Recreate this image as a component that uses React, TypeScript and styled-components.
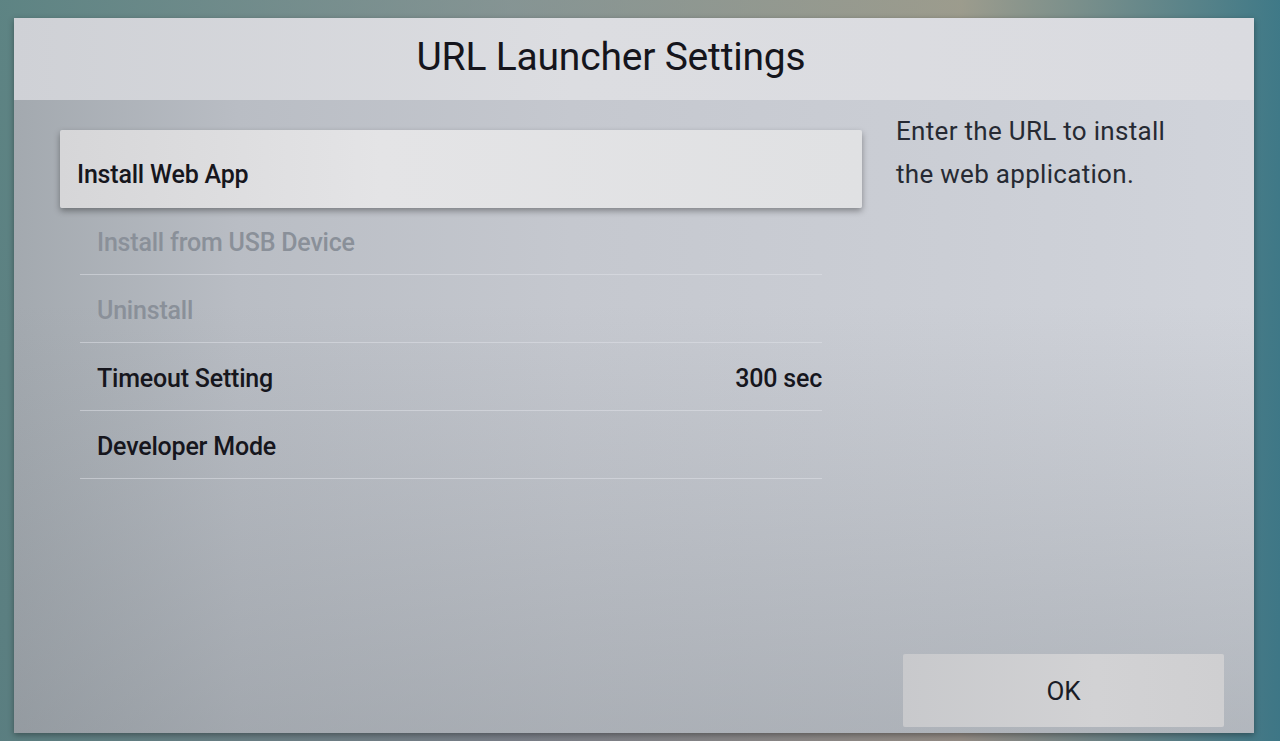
import React from 'react';
import styled, { createGlobalStyle } from 'styled-components';

const GlobalStyle = createGlobalStyle`
  html, body {
    margin: 0;
    padding: 0;
    width: 1280px;
    height: 741px;
    overflow: hidden;
  }
  body {
    font-family: Roboto, "Noto Sans", "Liberation Sans", sans-serif;
    background:
      linear-gradient(90deg, rgba(90, 130, 130, 0.9) 0%, rgba(140, 150, 150, 0.6) 40%, rgba(170, 160, 140, 0.7) 75%, rgba(60, 120, 135, 0.95) 100%),
      linear-gradient(180deg, #7c9290 0%, #5d5a72 100%);
  }
`;

const Screen = styled.div`
  width: 1280px;
  height: 741px;
  padding: 18px 26px 8px 14px;
  box-sizing: border-box;
  display: flex;
`;

const Panel = styled.div`
  flex: 1;
  display: flex;
  flex-direction: column;
  box-shadow: 0 2px 6px rgba(0, 0, 0, 0.35);
  background:
    linear-gradient(180deg, rgba(120, 128, 134, 0) 40%, rgba(120, 128, 134, 0.35) 100%),
    linear-gradient(90deg, #a3a9af 0%, #b9bdc4 18%, #c5c8cf 45%, #cbced5 75%, #d1d4db 100%);
`;

const Header = styled.header`
  height: 82px;
  display: flex;
  align-items: center;
  justify-content: center;
  padding-right: 46px;
  background: linear-gradient(90deg, #cfd1d6 0%, #dcdde1 45%, #dadbe0 100%);
`;

const Title = styled.h1`
  margin: 0;
  padding-bottom: 4px;
  font-size: 39px;
  font-weight: 400;
  color: #15151c;
  letter-spacing: -0.2px;
`;

const Body = styled.div`
  flex: 1;
  display: flex;
  gap: 34px;
  padding-left: 46px;
`;

const List = styled.ul`
  list-style: none;
  margin: 0;
  padding: 30px 0 0;
  width: 802px;
  flex-shrink: 0;
`;

const Row = styled.li<{ $focused?: boolean; $disabled?: boolean }>`
  display: flex;
  align-items: center;
  justify-content: space-between;
  box-sizing: border-box;
  height: ${p => (p.$focused ? '78px' : '68px')};
  padding: ${p => (p.$focused ? '10px 40px 0 17px' : '4px 0 0 17px')};
  margin: ${p => (p.$focused ? '0 0 -1px' : '0 40px 0 20px')};
  font-size: 25px;
  font-weight: 500;
  letter-spacing: -0.2px;
  color: ${p => (p.$disabled ? '#8a9099' : '#16161d')};
  background: ${p => (p.$focused ? 'linear-gradient(90deg, #d6d6d8 0%, #e4e4e6 40%, #e0e1e3 100%)' : 'transparent')};
  border-radius: ${p => (p.$focused ? '2px' : '0')};
  box-shadow: ${p => (p.$focused ? '0 3px 6px rgba(0, 0, 0, 0.35)' : 'none')};
  border-bottom: ${p => (p.$focused ? 'none' : '1px solid rgba(225, 228, 234, 0.5)')};
`;

const Value = styled.span`
  font-weight: 500;
`;

const Side = styled.aside`
  flex: 1;
  display: flex;
  flex-direction: column;
  padding: 10px 30px 6px 0;
`;

const Description = styled.p`
  margin: 0;
  font-size: 26px;
  font-weight: 400;
  line-height: 43px;
  color: #262a33;
  letter-spacing: 0.3px;
`;

const OkButton = styled.button`
  margin-top: auto;
  margin-left: 7px;
  height: 73px;
  border: none;
  border-radius: 2px;
  background: linear-gradient(90deg, #c8c9cc 0%, #d2d2d4 60%, #cfcfd1 100%);
  font-family: inherit;
  font-size: 26px;
  font-weight: 400;
  color: #1a1c26;
  cursor: pointer;
`;

const items = [
  { label: 'Install Web App', focused: true },
  { label: 'Install from USB Device', disabled: true },
  { label: 'Uninstall', disabled: true },
  { label: 'Timeout Setting', value: '300 sec' },
  { label: 'Developer Mode' },
];

const App: React.FC = () => {
  return (
    <>
      <GlobalStyle />
      <Screen>
        <Panel>
          <Header>
            <Title>URL Launcher Settings</Title>
          </Header>
          <Body>
            <List>
              {items.map(item => (
                <Row key={item.label} $focused={item.focused} $disabled={item.disabled}>
                  <span>{item.label}</span>
                  {item.value && <Value>{item.value}</Value>}
                </Row>
              ))}
            </List>
            <Side>
              <Description>
                Enter the URL to install
                <br />
                the web application.
              </Description>
              <OkButton>OK</OkButton>
            </Side>
          </Body>
        </Panel>
      </Screen>
    </>
  );
};

export default App;
